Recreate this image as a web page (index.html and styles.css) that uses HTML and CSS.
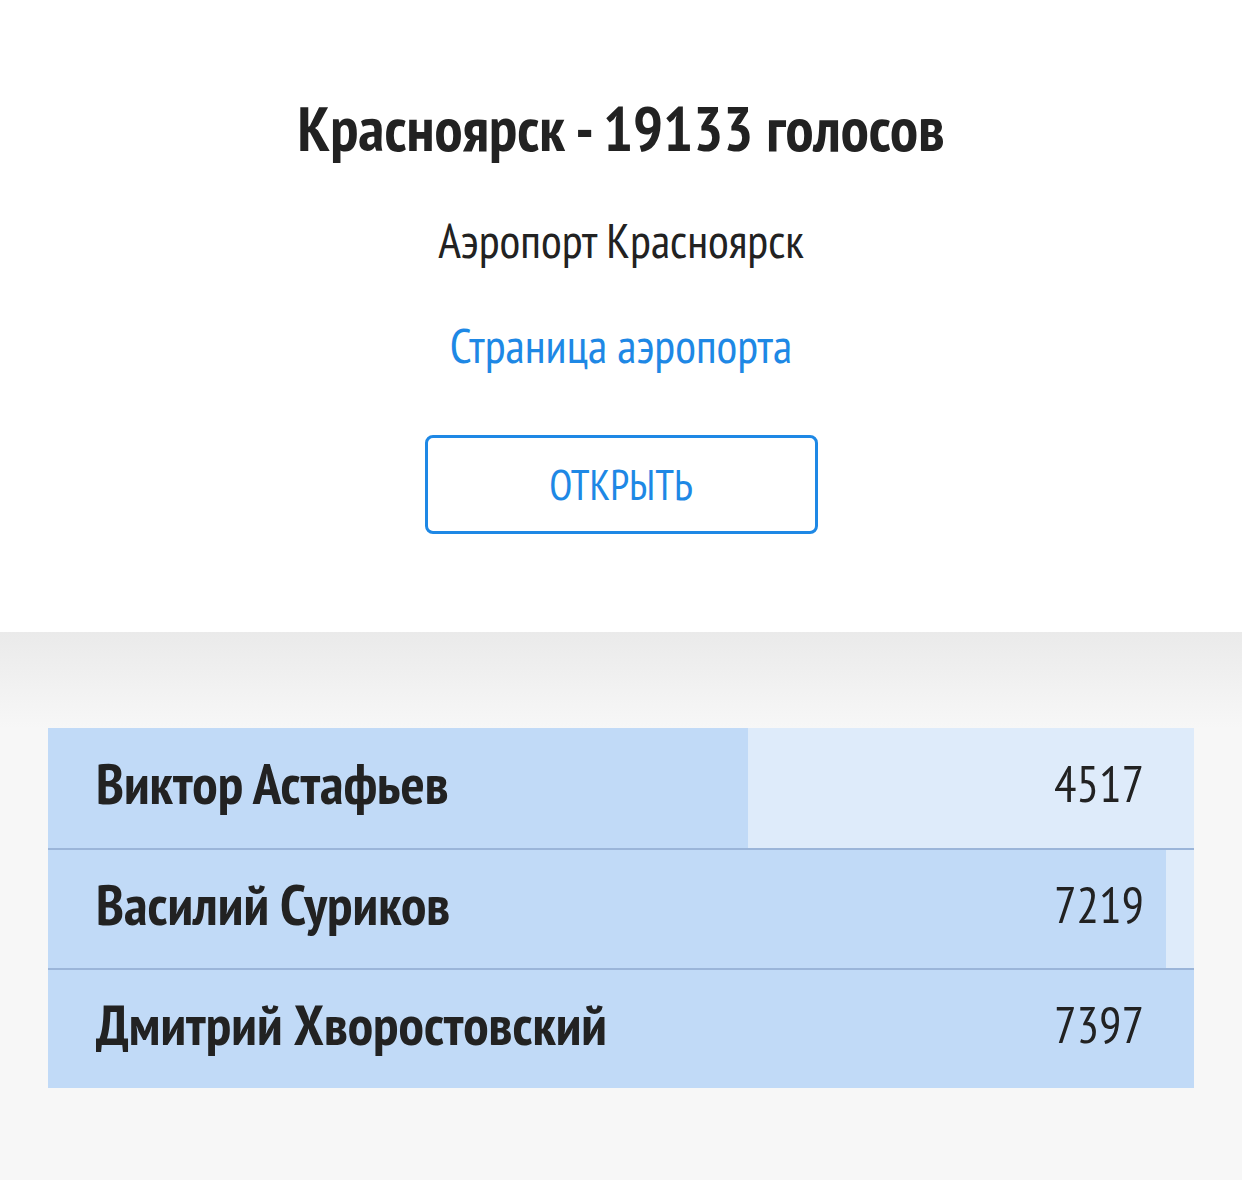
FILE: index.html
```html
<!DOCTYPE html>
<html>
  <head>
    <meta charset="utf-8" />
    <title>Красноярск</title>
    <link rel="stylesheet" href="styles.css">
  </head>
  <body>
    <div class="top">
      <h1 class="title">Красноярск - 19133 голосов</h1>
      <p class="airport">Аэропорт Красноярск</p>
      <a class="link" href="#">Страница аэропорта</a>
      <a class="button" href="#">ОТКРЫТЬ</a>
    </div>
    <div class="bottom">
      <div class="results">
        <div class="row">
          <div class="bar" style="width: 61.07%"></div>
          <span class="name">Виктор Астафьев</span>
          <span class="count">4517</span>
        </div>
        <div class="row">
          <div class="bar" style="width: 97.59%"></div>
          <span class="name">Василий Суриков</span>
          <span class="count">7219</span>
        </div>
        <div class="row">
          <div class="bar" style="width: 100%"></div>
          <span class="name">Дмитрий Хворостовский</span>
          <span class="count">7397</span>
        </div>
      </div>
    </div>
  </body>
</html>
```

FILE: styles.css
```css
body {
  margin: 0;
  font-family: "PT Sans Narrow", "Liberation Sans Narrow", "DejaVu Sans Condensed", sans-serif;
  color: #222;
  background: #f7f7f7;
}

.top {
  background: #fff;
  height: 632px;
  display: flex;
  flex-direction: column;
  align-items: center;
}

.title {
  margin: 90px 0 0 0;
  font-size: 63px;
  line-height: 76px;
  font-weight: bold;
}

.airport {
  margin: 44px 0 0 0;
  font-size: 48px;
  line-height: 60px;
}

.link {
  margin-top: 45px;
  font-size: 48px;
  line-height: 60px;
  color: #1e88e5;
  text-decoration: none;
}

.button {
  margin-top: 60px;
  width: 387px;
  height: 93px;
  border: 3px solid #1e88e5;
  border-radius: 8px;
  display: flex;
  align-items: center;
  justify-content: center;
  font-size: 42px;
  color: #1e88e5;
  text-decoration: none;
}

.bottom {
  background: linear-gradient(#eaeaea, #f7f7f7 96px);
  padding: 96px 48px 93px 48px;
}

.results {
  display: flex;
  flex-direction: column;
  background: #9bb5d9;
  gap: 2px;
}

.row {
  position: relative;
  height: 118px;
  background: #deebfa;
  display: flex;
  align-items: center;
  justify-content: space-between;
  padding: 0 50px 10px 48px;
  box-sizing: border-box;
}

.row:first-child {
  height: 120px;
}

.bar {
  position: absolute;
  left: 0;
  top: 0;
  bottom: 0;
  background: #c1daf7;
}

.name {
  position: relative;
  font-size: 57px;
  font-weight: bold;
}

.count {
  position: relative;
  font-size: 50px;
}
```
